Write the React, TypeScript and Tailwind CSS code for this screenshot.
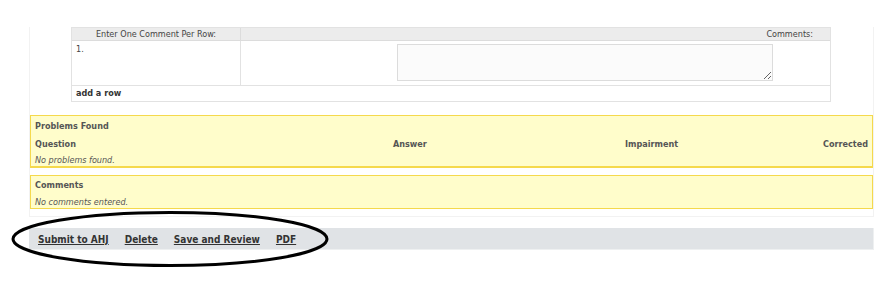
import React from "react";

const font = { fontFamily: '"DejaVu Sans Condensed", "DejaVu Sans", Verdana, sans-serif' };

function CommentTable() {
  return (
    <div className="ml-[41px] w-[760px] border border-[#e2e2e2] text-[9px] text-[#444]">
      <div className="flex h-[13px] bg-[#ececec] border-b border-[#dcdcdc] leading-[12px]">
        <div className="w-[169px] border-r border-[#dcdcdc] text-center">Enter One Comment Per Row:</div>
        <div className="flex-1 text-right pr-[17px]">Comments:</div>
      </div>
      <div className="flex h-[45px] border-b border-[#e2e2e2]">
        <div className="w-[169px] border-r border-[#e2e2e2] pl-[4px] pt-[2px]">1.</div>
        <div className="flex-1 pt-[3px] pl-[156px]">
          <textarea className="block w-[376px] h-[37px] border border-[#dcdcdc] bg-[#fbfbfb] resize-y" />
        </div>
      </div>
      <div className="h-[15px] pl-[4px] font-bold text-[#333] leading-[14px]">add a row</div>
    </div>
  );
}

export default function App() {
  return (
    <div className="relative w-[890px] h-[300px] bg-white overflow-hidden font-stretch-condensed" style={font}>
      <div className="ml-[29px] mt-[27px] w-[845px] border-x border-b border-[#f2f2f2] pb-[7px]">
        <CommentTable />

        <div className="mt-[13px] border border-[#f5d94c] border-b-2 bg-[#fffdcb] px-[4px] pt-[3px] text-[9px] leading-[14px] text-[#555]">
          <div className="font-bold h-[14px]">Problems Found</div>
          <div className="flex font-bold mt-[4px] h-[14px]">
            <div className="w-[358px]">Question</div>
            <div className="w-[232px]">Answer</div>
            <div className="flex-1">Impairment</div>
            <div>Corrected</div>
          </div>
          <div className="italic h-[13px] mt-[2px]">No problems found.</div>
        </div>

        <div className="mt-[7px] border border-[#f5d94c] bg-[#fffdcb] px-[4px] pt-[2px] text-[9px] leading-[14px] text-[#555]">
          <div className="font-bold h-[14px]">Comments</div>
          <div className="italic h-[13px] mt-[3px]">No comments entered.</div>
        </div>
      </div>

      <div className="ml-[29px] mt-[11px] w-[845px] h-[22px] bg-[#e0e3e6] border-r border-b border-[#eef0f1] flex items-center gap-[16px] pl-[9px] pt-[1px] text-[10px] font-bold text-[#333]">
        <a href="#" className="underline">Submit to AHJ</a>
        <a href="#" className="underline">Delete</a>
        <a href="#" className="underline">Save and Review</a>
        <a href="#" className="underline">PDF</a>
      </div>

      <svg className="absolute left-0 top-0 pointer-events-none" width="890" height="300">
        <ellipse cx="170" cy="239" rx="157" ry="26.5" fill="none" stroke="#000" strokeWidth="3" />
      </svg>
    </div>
  );
}
